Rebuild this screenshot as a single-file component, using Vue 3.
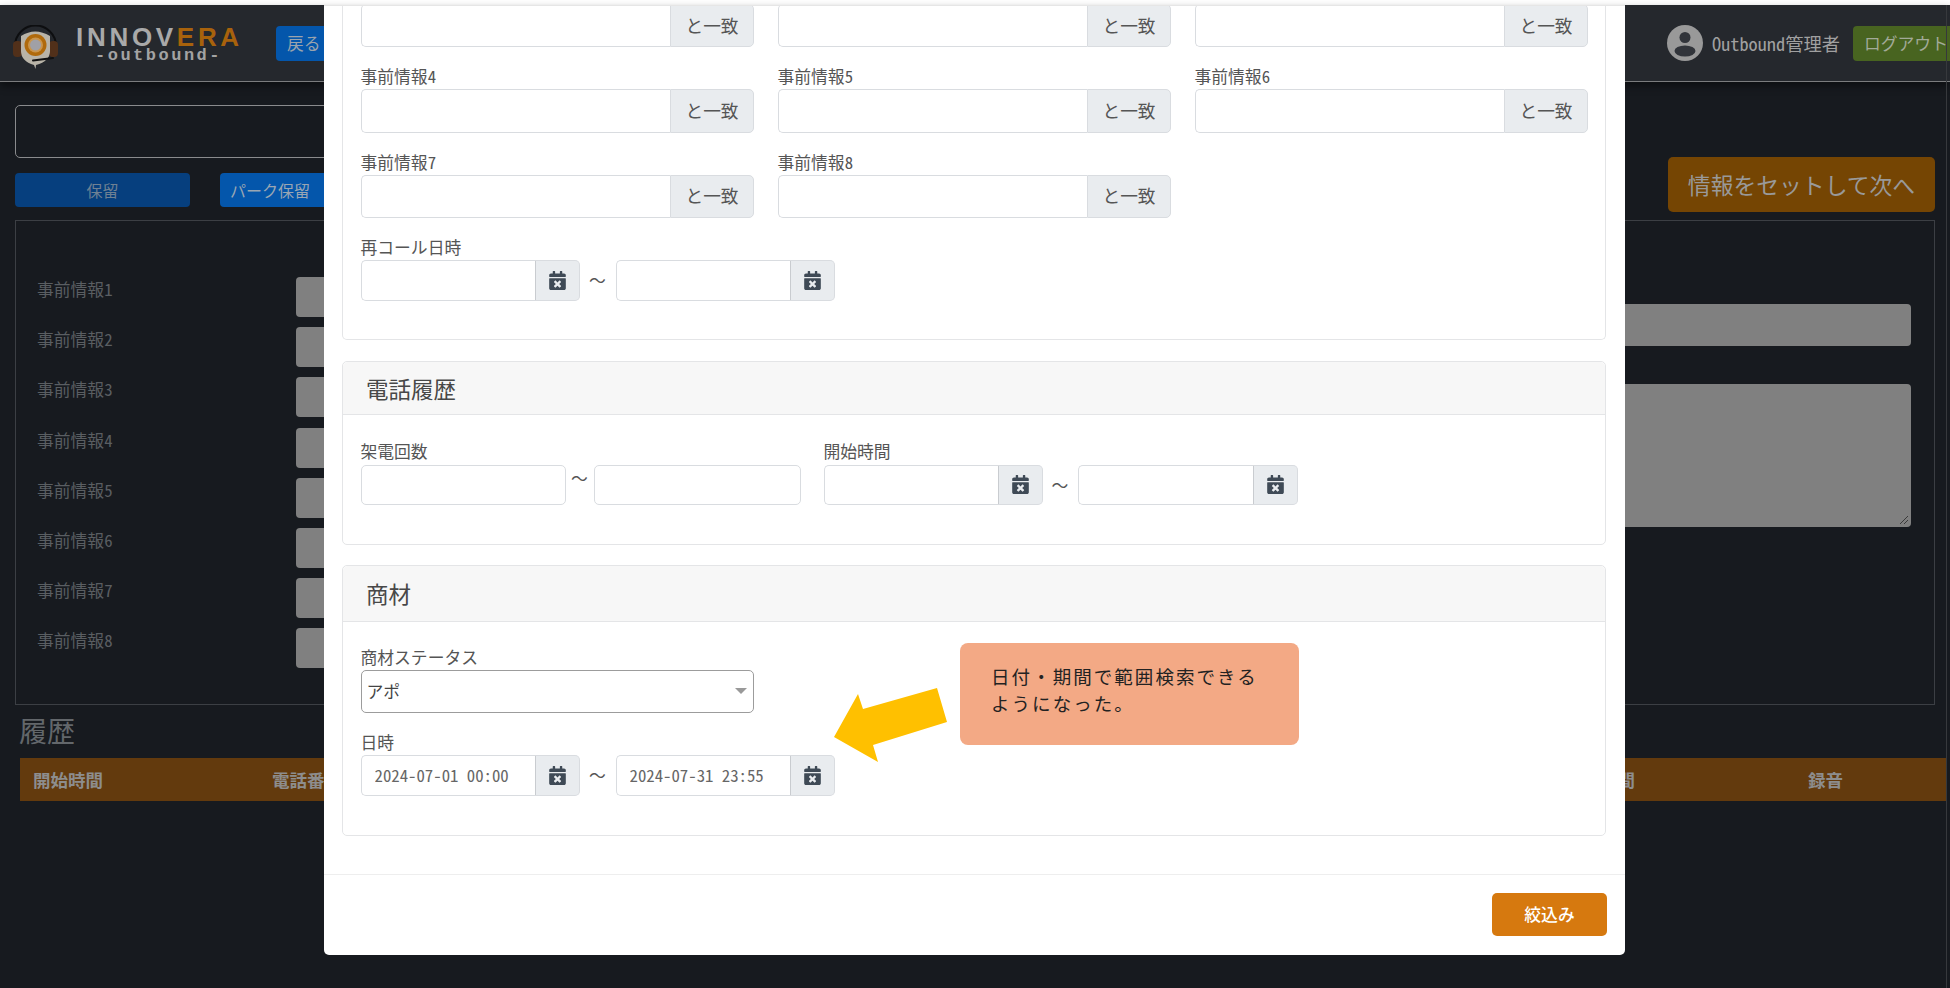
<script setup>
const row1 = ['', '', '']
const row2 = ['事前情報4', '事前情報5', '事前情報6']
const row3 = ['事前情報7', '事前情報8']
const infos = ['事前情報1', '事前情報2', '事前情報3', '事前情報4', '事前情報5', '事前情報6', '事前情報7', '事前情報8']
const cal = 'M436 160H12c-6.6 0-12-5.4-12-12v-36c0-26.5 21.5-48 48-48h48V12c0-6.6 5.4-12 12-12h40c6.6 0 12 5.4 12 12v52h128V12c0-6.6 5.4-12 12-12h40c6.6 0 12 5.4 12 12v52h48c26.5 0 48 21.5 48 48v36c0 6.6-5.4 12-12 12zM12 192h424c6.6 0 12 5.4 12 12v260c0 26.5-21.5 48-48 48H48c-26.5 0-48-21.5-48-48V204c0-6.6 5.4-12 12-12zm257.3 160l48.1-48.1c4.7-4.7 4.7-12.3 0-17l-28.3-28.3c-4.7-4.7-12.3-4.7-17 0L224 306.7l-48.1-48.1c-4.7-4.7-12.3-4.7-17 0l-28.3 28.3c-4.7 4.7-4.7 12.3 0 17l48.1 48.1-48.1 48.1c-4.7 4.7-4.7 12.3 0 17l28.3 28.3c4.7 4.7 12.3 4.7 17 0l48.1-48.1 48.1 48.1c4.7 4.7 12.3 4.7 17 0l28.3-28.3c4.7-4.7 4.7-12.3 0-17L269.3 352z'
</script>

<template>
  <div class="root">
    <div class="page">
      <header class="topbar">
        <svg class="logo" viewBox="7 10 46 46" width="46" height="46">
          <path d="M10 31A20.5 20.5 0 0 1 51 31" fill="none" stroke="#0d0e10" stroke-width="2" />
          <rect x="8" y="26" width="9" height="16" rx="4" fill="#51301a" />
          <rect x="44" y="26" width="9" height="16" rx="4" fill="#51301a" />
          <path d="M16 21Q30 12 45 21V36Q45 46 31 50L30.5 54L29 50Q16 46 16 36Z" fill="#b9b4a8" />
          <circle cx="30.5" cy="30" r="11" fill="#b06a0c" />
          <circle cx="30.5" cy="30" r="7.5" fill="#c9954d" />
          <circle cx="30.5" cy="30" r="5.5" fill="#a0a0a6" />
          <path d="M28 45.5L48 43" fill="none" stroke="#111" stroke-width="2" stroke-linecap="round" />
        </svg>
        <div class="brand">
          <div class="brand-main">INNOV<span class="brand-accent">ERA</span></div>
          <div class="brand-sub">-outbound-</div>
        </div>
        <button class="back">戻る</button>
        <div class="user">
          <svg viewBox="0 0 36 36" width="36" height="36">
            <circle cx="18" cy="18" r="18" fill="#999" />
            <circle cx="18" cy="12.5" r="5.5" fill="#31343a" />
            <ellipse cx="18" cy="26" rx="10.5" ry="5.5" fill="#31343a" />
          </svg>
          <span class="user-name">Outbound管理者</span>
          <button class="logout">ログアウト</button>
        </div>
      </header>

      <section class="toolbar">
        <div class="toolbar-left">
          <div class="search"></div>
          <div class="toolbar-buttons">
            <button class="hold">保留</button>
            <button class="park">パーク保留</button>
          </div>
        </div>
        <button class="next">情報をセットして次へ</button>
      </section>

      <section class="info-box">
        <div class="info-left">
          <div v-for="name in infos" :key="name" class="info-row">
            <span class="info-label">{{ name }}</span>
            <div class="info-input"></div>
          </div>
        </div>
        <div class="info-right">
          <div class="gray-input"></div>
          <div class="gray-area">
            <svg class="grip" viewBox="0 0 10 10" width="10" height="10">
              <path d="M1 9L9 1M5 9L9 5" stroke="#3a3a3a" stroke-width="1" fill="none" />
            </svg>
          </div>
        </div>
      </section>

      <h2 class="history-title">履歴</h2>
      <div class="history-head">
        <span class="hc1">開始時間</span>
        <span class="hc2">電話番号</span>
        <span class="hc3">通話時間</span>
        <span>録音</span>
      </div>
    </div>

    <div class="edge"></div>

    <div class="modal">
      <div class="modal-body">
        <div class="card card-first">
          <div class="card-content first-content">
            <div class="grid3">
              <div v-for="(x, i) in row1" :key="i" class="group match"><input class="ctl" readonly /><span class="addon">と一致</span></div>
            </div>
            <div class="grid3">
              <div v-for="name in row2" :key="name" class="field">
                <label class="lbl">{{ name }}</label>
                <div class="group match"><input class="ctl" readonly /><span class="addon">と一致</span></div>
              </div>
            </div>
            <div class="grid3">
              <div v-for="name in row3" :key="name" class="field">
                <label class="lbl">{{ name }}</label>
                <div class="group match"><input class="ctl" readonly /><span class="addon">と一致</span></div>
              </div>
            </div>
            <div class="field">
              <label class="lbl">再コール日時</label>
              <div class="range">
                <div class="group date"><input class="ctl" readonly /><span class="addon icon"><svg viewBox="0 0 448 512" width="17" height="19"><path :d="cal" /></svg></span></div>
                <span class="tilde">～</span>
                <div class="group date"><input class="ctl" readonly /><span class="addon icon"><svg viewBox="0 0 448 512" width="17" height="19"><path :d="cal" /></svg></span></div>
              </div>
            </div>
          </div>
        </div>

        <div class="card">
          <div class="card-head h54">電話履歴</div>
          <div class="card-content pad-top">
            <div class="phone-row">
              <div class="phone-count">
                <label class="lbl lbl26">架電回数</label>
                <div class="range">
                  <input class="ctl num" readonly />
                  <span class="tilde tilde-num">～</span>
                  <input class="ctl num num2" readonly />
                </div>
              </div>
              <div>
                <label class="lbl lbl26">開始時間</label>
                <div class="range">
                  <div class="group date h40"><input class="ctl" readonly /><span class="addon icon"><svg viewBox="0 0 448 512" width="17" height="19"><path :d="cal" /></svg></span></div>
                  <span class="tilde tilde-35">～</span>
                  <div class="group date h40 w220"><input class="ctl" readonly /><span class="addon icon"><svg viewBox="0 0 448 512" width="17" height="19"><path :d="cal" /></svg></span></div>
                </div>
              </div>
            </div>
          </div>
        </div>

        <div class="card">
          <div class="card-head h56">商材</div>
          <div class="card-content pad-top">
            <label class="lbl">商材ステータス</label>
            <div class="select"><span>アポ</span><i class="caret"></i></div>
            <div class="field">
              <label class="lbl">日時</label>
              <div class="range">
                <div class="group date"><input class="ctl" value="2024-07-01 00:00" readonly /><span class="addon icon"><svg viewBox="0 0 448 512" width="17" height="19"><path :d="cal" /></svg></span></div>
                <span class="tilde">～</span>
                <div class="group date"><input class="ctl" value="2024-07-31 23:55" readonly /><span class="addon icon"><svg viewBox="0 0 448 512" width="17" height="19"><path :d="cal" /></svg></span></div>
              </div>
            </div>
          </div>
        </div>
      </div>
      <div class="modal-foot">
        <button class="apply">絞込み</button>
      </div>
    </div>

    <svg class="arrow" viewBox="0 0 120 80" width="120" height="80">
      <path d="M1 50L25 7L30 22L104 1L114 35L40 58L45 75Z" fill="#ffc000" />
    </svg>
    <div class="callout">日付・期間で範囲検索できる<br />ようになった。</div>
  </div>
</template>

<style>
html, body { margin: 0; background: #fff; }
</style>

<style scoped>
.root {
  position: relative;
  width: 1950px;
  height: 988px;
  overflow: hidden;
  padding-top: 5px;
  box-sizing: border-box;
  background: #fff;
  font-family: "Noto Sans Mono CJK JP", "Liberation Mono", "Noto Sans CJK JP", monospace;
  font-size: 16.8px;
}
button { font-family: inherit; border: 0; padding: 0; cursor: default; }
.page { height: 983px; background: #171a1f; }
.topbar {
  position: relative;
  height: 76px;
  display: flex;
  align-items: center;
  padding-left: 12px;
  background: #25282d;
  border-bottom: 1px solid #7b7c7e;
  box-shadow: 0 4px 8px rgba(0, 0, 0, 0.45);
}
.logo { flex: none; margin-right: 18px; margin-top: 9px; }
.brand { width: 165px; text-align: center; padding-top: 3px; }
.brand-main {
  font: bold 26px/20px "Liberation Sans", sans-serif;
  letter-spacing: 3.7px;
  color: #a9a9a9;
  white-space: nowrap;
}
.brand-accent { color: #a8620c; }
.brand-sub {
  margin-top: 2px;
  font: bold 17px/14px "Liberation Mono", monospace;
  letter-spacing: 2.5px;
  color: #a3a3a3;
}
.back {
  margin-left: 35px;
  width: 60px;
  height: 35px;
  border-radius: 4px;
  background: #0456ab;
  color: #9aa3ad;
  font-size: 16.8px;
  text-align: left;
  padding-left: 11px;
}
.user { margin-left: auto; display: flex; align-items: center; }
.user-name { margin-left: 9px; margin-right: 13px; font-size: 18.3px; color: #a0a0a0; white-space: nowrap; }
.logout {
  width: 97px;
  height: 35px;
  border-radius: 4px 0 0 4px;
  background: #486420;
  color: #a2aa98;
  font-size: 16.8px;
  text-align: left;
  padding-left: 11px;
  white-space: nowrap;
}
.toolbar { display: flex; padding: 23px 15px 0; }
.toolbar-left { width: 1300px; }
.search { height: 53px; box-sizing: border-box; border: 1px solid #8a8b8d; border-radius: 5px; }
.toolbar-buttons { display: flex; margin-top: 15px; gap: 30px; }
.hold, .park { height: 34px; border-radius: 4px; font-size: 16px; }
.hold { width: 175px; background: #063f7e; color: #6f8193; }
.park { width: 120px; background: #0456ab; color: #9aa6b3; text-align: left; padding-left: 10px; }
.next {
  margin-left: auto;
  margin-top: 52px;
  width: 267px;
  height: 55px;
  border-radius: 5px;
  background: #754503;
  color: #999;
  font-size: 22.8px;
  font-family: "Noto Sans CJK JP", sans-serif;
  white-space: nowrap;
}
.info-box {
  margin: 8px 15px 0;
  height: 485px;
  box-sizing: border-box;
  border: 1px solid #3c3f44;
  display: flex;
  justify-content: space-between;
  padding: 56px 23px 0 21px;
}
.info-left { width: 800px; display: flex; flex-direction: column; gap: 10.2px; }
.info-row { display: flex; height: 40px; }
.info-label { width: 259px; flex: none; color: #5a5e62; line-height: 24px; }
.info-input { flex: 1; background: #808080; border-radius: 4px; }
.info-right { width: 900px; padding-top: 27px; }
.gray-input { height: 42px; background: #808080; border-radius: 4px; }
.gray-area { position: relative; height: 143px; margin-top: 38px; background: #808080; border-radius: 4px; }
.grip { position: absolute; right: 2px; bottom: 2px; }
.history-title {
  margin: 7px 0 10px 19px;
  font-size: 28px;
  line-height: 36px;
  font-weight: 400;
  color: #63676b;
  font-family: "Noto Sans CJK JP", sans-serif;
}
.history-head {
  margin-left: 20px;
  width: 1927px;
  height: 43px;
  box-sizing: border-box;
  padding-left: 13px;
  display: flex;
  align-items: center;
  background: #633a0d;
  color: #8d8d8d;
  font-weight: 700;
  font-size: 17.5px;
  font-family: "Noto Sans CJK JP", sans-serif;
}
.hc1 { width: 239px; }
.hc2 { width: 1293px; }
.hc3 { width: 243px; }
.edge { position: absolute; left: 1946px; top: 5px; width: 1px; height: 983px; background: #37393d; }

.modal {
  position: absolute;
  left: 324px;
  top: 5px;
  width: 1301px;
  height: 950px;
  box-sizing: border-box;
  background: #fff;
  border-top: 1px solid #e6e6e6;
  border-radius: 0 0 5px 5px;
  overflow: hidden;
  color: #555;
}
.modal-body { margin-top: -2px; padding: 0 19px 0 18px; }
.card { border: 1px solid #e4e5e7; border-radius: 5px; margin-top: 20px; }
.card:nth-child(2) { margin-top: 21px; }
.card-first { border-top: 0; margin-top: 0; border-radius: 0 0 5px 5px; }
.card-content { padding: 0 18px 39px 17.5px; }
.first-content { padding-bottom: 38.1px; }
.pad-top { padding-top: 24px; }
.card-head {
  box-sizing: border-box;
  padding-left: 23px;
  display: flex;
  align-items: center;
  background: #f7f7f7;
  border-bottom: 1px solid #e4e5e7;
  font-size: 22.5px;
  color: #484848;
  font-family: "Noto Sans CJK JP", sans-serif;
  border-radius: 5px 5px 0 0;
}
.h54 { height: 53px; }
.h56 { height: 56px; }
.grid3 { display: grid; grid-template-columns: repeat(3, 393.5px); column-gap: 23.5px; }
.field { margin-top: 18px; }
.lbl { display: block; height: 24px; line-height: 22px; color: #555; white-space: nowrap; }
.lbl26 { height: 26px; line-height: 24px; }
.group { display: flex; box-sizing: border-box; }
.match { height: 43.3px; }
.ctl {
  flex: 1;
  min-width: 0;
  box-sizing: border-box;
  border: 1.3px solid #d9dce0;
  border-radius: 5px 0 0 5px;
  border-right: 0;
  outline: 0;
  padding: 0 0 0 13px;
  font: inherit;
  color: #666;
  background: #fff;
}
.addon {
  flex: none;
  box-sizing: border-box;
  display: flex;
  align-items: center;
  justify-content: center;
  background: #e9ecef;
  border: 1.3px solid #d9dce0;
  border-radius: 0 5px 5px 0;
  font-size: 17.7px;
  color: #555;
  font-family: "Noto Sans CJK JP", sans-serif;
}
.match .addon { width: 84px; padding-bottom: 2px; }
.icon { width: 45px; border-left-color: #c9ccd0; }
.icon svg { fill: #3f4a56; }
.range { display: flex; align-items: center; }
.date { width: 219px; height: 41px; }
.h40 { height: 40px; }
.w220 { width: 220px; }
.tilde { width: 36px; flex: none; text-align: center; color: #555; font-family: "Noto Sans CJK JP", sans-serif; }
.tilde-35 { width: 35px; }
.tilde-num { width: 28px; position: relative; top: -7px; }
.num { flex: none; width: 205px; height: 40px; border: 1.3px solid #d9dce0; border-radius: 5px; }
.num2 { width: 207px; }
.phone-row { display: flex; }
.phone-count { margin-right: 23px; }
.select {
  position: relative;
  width: 393.5px;
  height: 43px;
  box-sizing: border-box;
  border: 1.3px solid #9c9c9c;
  border-radius: 5px;
  display: flex;
  align-items: center;
  padding-left: 5px;
  color: #444;
}
.caret {
  position: absolute;
  right: 6px;
  top: 17px;
  border-left: 6px solid transparent;
  border-right: 6px solid transparent;
  border-top: 6px solid #999;
}
.modal-foot {
  margin-top: 38px;
  border-top: 1px solid #eee;
  padding-top: 18px;
  display: flex;
  justify-content: flex-end;
  padding-right: 18px;
}
.apply {
  width: 115px;
  height: 43px;
  border-radius: 5px;
  background: #d6790f;
  color: #fff;
  font-size: 16.8px;
  font-family: "Noto Sans CJK JP", sans-serif;
  font-weight: 500;
}
.arrow { position: absolute; left: 833px; top: 687px; }
.callout {
  position: absolute;
  left: 960px;
  top: 643px;
  width: 339px;
  height: 102px;
  box-sizing: border-box;
  padding: 19.5px 0 0 31px;
  background: #f3a985;
  border-radius: 8px;
  color: #222;
  font-family: "Noto Sans CJK JP", sans-serif;
  font-size: 18.5px;
  line-height: 27px;
  letter-spacing: 2.05px;
  white-space: nowrap;
}
</style>
